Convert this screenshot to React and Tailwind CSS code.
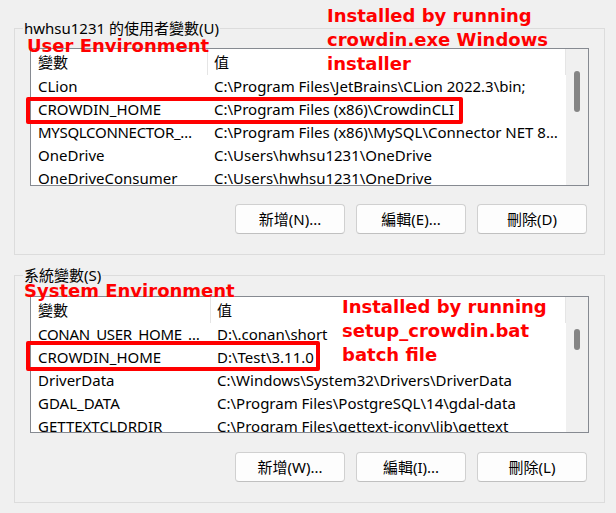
import React from 'react';

const UI_FONT = { fontFamily: '"Noto Sans", "Noto Sans CJK TC", sans-serif' };
const NOTE_FONT = { fontFamily: '"DejaVu Sans", Verdana, sans-serif' };

const userVars = [
  ['CLion', 'C:\\Program Files\\JetBrains\\CLion 2022.3\\bin;'],
  ['CROWDIN_HOME', 'C:\\Program Files (x86)\\CrowdinCLI'],
  ['MYSQLCONNECTOR_…', 'C:\\Program Files (x86)\\MySQL\\Connector NET 8…'],
  ['OneDrive', 'C:\\Users\\hwhsu1231\\OneDrive'],
  ['OneDriveConsumer', 'C:\\Users\\hwhsu1231\\OneDrive'],
];

const systemVars = [
  ['CONAN_USER_HOME_…', 'D:\\.conan\\short'],
  ['CROWDIN_HOME', 'D:\\Test\\3.11.0'],
  ['DriverData', 'C:\\Windows\\System32\\Drivers\\DriverData'],
  ['GDAL_DATA', 'C:\\Program Files\\PostgreSQL\\14\\gdal-data'],
  ['GETTEXTCLDRDIR', 'C:\\Program Files\\gettext-iconv\\lib\\gettext'],
];

const VarList = ({ rows, nameWidth, height, thumbTop, thumbHeight }) => (
  <div className="flex w-[559px] border border-[#868a91] bg-white overflow-hidden" style={{ height }}>
    <div className="w-[535px] flex flex-col">
      <div className="flex h-[26px] shrink-0 text-[15px] text-black">
        <div className="border-r border-[#e5e5e5] pl-[7px] flex items-center" style={{ width: nameWidth }}>變數</div>
        <div className="flex-1 border-r border-[#e5e5e5] pl-[6px] flex items-center">值</div>
      </div>
      {rows.map(([name, value]) => (
        <div key={name} className="flex h-[23px] shrink-0 text-[15px] text-black whitespace-nowrap">
          <div className="pl-[7px] flex items-center shrink-0" style={{ width: nameWidth }}>
            <span className={name.endsWith('…') ? 'tracking-[-0.3px]' : ''}>{name}</span>
          </div>
          <div className="flex-1 pl-[6px] flex items-center overflow-hidden">{value}</div>
        </div>
      ))}
    </div>
    <div className="w-[22px] bg-[#f0f0f0] flex flex-col items-center">
      <div className="w-[6px] rounded-[3px] bg-[#858585]" style={{ marginTop: thumbTop, height: thumbHeight }} />
    </div>
  </div>
);

const Btn = ({ children }) => (
  <button className="w-[110px] h-[30px] rounded-[4px] border border-[#d0d0d0] border-b-[#c0c0c0] bg-[#fdfdfd] text-[15px] text-black flex items-center justify-center">
    {children}
  </button>
);

const GroupBox = ({ label, children, height, className = '' }) => (
  <div className={`relative w-[591px] border border-[#dcdcdc] ${className}`} style={{ height }}>
    <span className="absolute left-[8px] top-[-11px] bg-[#f0f0f0] px-[1px] text-[15px] leading-[20px] text-black">{label}</span>
    {children}
  </div>
);

export default function App() {
  return (
    <div className="relative w-[616px] h-[513px] bg-[#f0f0f0] pt-[28px] pl-[14px] overflow-hidden" style={UI_FONT}>
      <GroupBox label="hwhsu1231 的使用者變數(U)" height={227}>
        <div className="pl-[15px] pt-[19px]">
          <VarList rows={userVars} nameWidth={177} height={138} thumbTop={22} thumbHeight={41} />
          <div className="w-[559px] pr-[2px] mt-[18px] flex justify-end gap-[11px]">
            <Btn>新增(N)...</Btn>
            <Btn>編輯(E)...</Btn>
            <Btn>刪除(D)</Btn>
          </div>
        </div>
      </GroupBox>

      <GroupBox label="系統變數(S)" height={228} className="mt-[20px]">
        <div className="pl-[15px] pt-[20px]">
          <VarList rows={systemVars} nameWidth={180} height={137} thumbTop={32} thumbHeight={21} />
          <div className="w-[559px] pr-[2px] mt-[19px] flex justify-end gap-[11px]">
            <Btn>新增(W)...</Btn>
            <Btn>編輯(I)...</Btn>
            <Btn>刪除(L)</Btn>
          </div>
        </div>
      </GroupBox>

      {/* annotations */}
      <div className="absolute left-[26px] top-[97px] w-[437px] h-[27px] border-[4px] border-[#ff0000] rounded-[2px]" />
      <div className="absolute left-[26px] top-[341px] w-[294px] h-[30px] border-[4px] border-[#ff0000] rounded-[2px]" />

      <div className="absolute left-[27px] top-[34px] text-[18px] leading-[24px] font-bold text-[#ff0000] whitespace-nowrap" style={NOTE_FONT}>
        User Environment
      </div>
      <div className="absolute left-[327px] top-[4px] text-[18px] leading-[24px] font-bold text-[#ff0000] whitespace-nowrap" style={NOTE_FONT}>
        Installed by running<br />crowdin.exe Windows<br />installer
      </div>
      <div className="absolute left-[24px] top-[279px] text-[18px] leading-[24px] font-bold text-[#ff0000] whitespace-nowrap" style={NOTE_FONT}>
        System Environment
      </div>
      <div className="absolute left-[342px] top-[295px] text-[18px] leading-[24px] font-bold text-[#ff0000] whitespace-nowrap" style={NOTE_FONT}>
        Installed by running<br />setup_crowdin.bat<br />batch file
      </div>
    </div>
  );
}
